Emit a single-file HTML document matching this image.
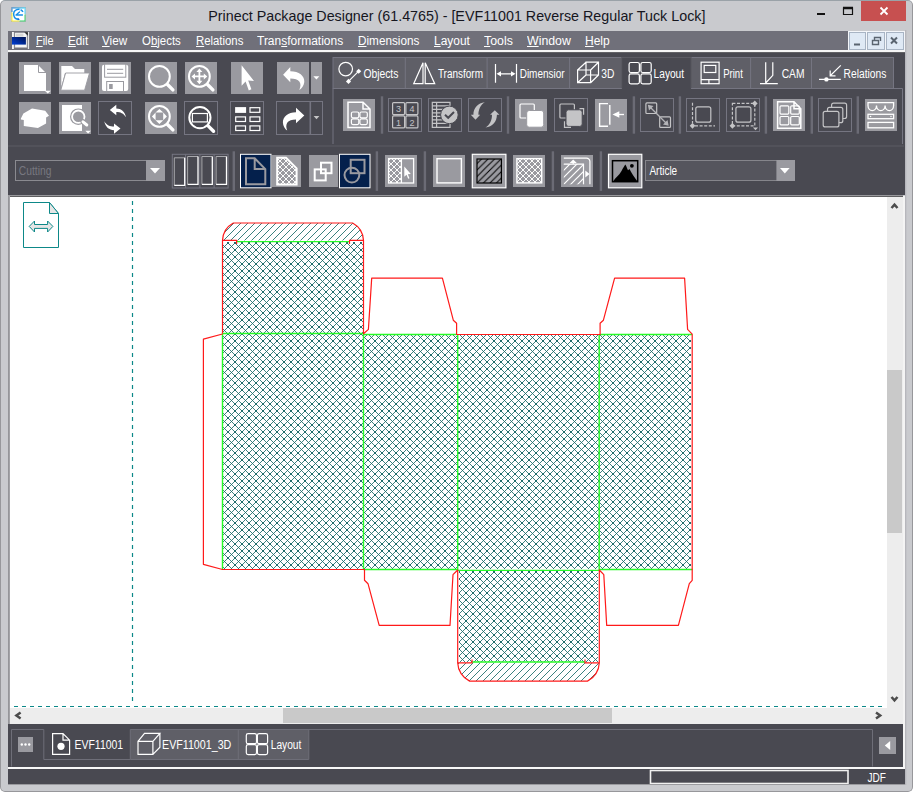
<!DOCTYPE html>
<html><head><meta charset="utf-8">
<style>
*{box-sizing:border-box;margin:0;padding:0}
html,body{width:913px;height:792px;overflow:hidden;background:#fff;font-family:"Liberation Sans",sans-serif;}
#w{position:absolute;left:0;top:0;width:913px;height:792px;background:#c9cace;overflow:hidden;border-radius:5px}#wb{position:absolute;left:0;top:0;width:913px;height:792px;border:1px solid #97979b;border-top-color:#9aa2a8;border-radius:5px;pointer-events:none}
.a{position:absolute}
#title{left:0;top:7px;width:913px;text-align:center;font-size:15px;color:#16161e;white-space:nowrap}#tt{display:inline-block;transform:scaleX(.953);transform-origin:50% 50%}
#menubar{left:8px;top:31px;width:897px;height:20px;background:#70707a}
#menubar span{position:absolute;top:2.5px;font-size:12px;color:#fff;white-space:nowrap;transform-origin:0 0}
#tb{left:8px;top:53px;width:897px;height:142px;background:#494951}
.b{position:absolute;width:32px;height:32px;background:#9a9aa0}
.bd{position:absolute;width:33px;height:33px;border:1px solid #73737b}
#canvas{left:10px;top:197px;width:877px;height:511px;background:#fff}
#bottom{left:8px;top:724px;width:895px;height:43px;background:#494951}
.tab{position:absolute;top:57px;height:32px;background:#62626a;border:1px solid #72727a;border-bottom:none;color:#fff;font-size:12px}
.tab span{position:absolute;top:9px;white-space:nowrap;transform-origin:0 0;transform:scaleX(.88)}
.sep{position:absolute;width:3px;background:#66666e}
svg{position:absolute;overflow:visible}
.mdi{top:1px;width:17px;height:17.700px;background:#dfe9f5;border:1px solid #a8b4c4}
</style></head><body>
<div id="w">
<svg style="left:11px;top:7px" width="15" height="15" viewBox="0 0 15 15"><defs><linearGradient id="ig" x1="0" y1="0" x2="1" y2="0"><stop offset="0" stop-color="#1878d0"/><stop offset="1" stop-color="#28d4ff"/></linearGradient></defs><rect x="0" y="0" width="15" height="15" rx="1" fill="#8a8a90"/><rect x="0.500" y="0.500" width="14" height="14" fill="#fff"/><path d="M0.500,0.500 H14.500 V1.500 H0.500 Z" fill="url(#ig)"/><path d="M0.500,1.500 H1.500 V5 H0.500 Z" fill="#2a80c8"/><path d="M13.500,1.500 H14.500 V7 H13.500 Z" fill="#50d8ff"/><path d="M0.500,5.500 H1.500 V13.500 H8.500 V14.500 H0.500 Z" fill="#fff030"/><path d="M13.500,7.500 H14.500 V14.500 H8.500 V13.500 H13.500 Z" fill="#38d068"/><path d="M12,4.800 A5,5 0 1 0 8,12.300" stroke="#1890e8" stroke-width="1.500" fill="none" stroke-dasharray="3.200 1 30"/><path d="M5,8 H11.500 M5,8 L8.500,5" stroke="#1890e8" stroke-width="1.300" fill="none" stroke-linecap="round"/><path d="M6.500,11 L9,12.300 L6.800,13.500 Z" fill="#1070e0"/></svg>
<div class="a" id="title"><span id="tt">Prinect Package Designer (61.4765) - [EVF11001 Reverse Regular Tuck Lock]</span></div>
<div class="a" style="left:861px;top:1px;width:45px;height:20px;background:#c75050"></div>
<svg style="left:810px;top:0" width="103" height="30"><path d="M7,14 H15" stroke="#111" stroke-width="2" fill="none"/><path d="M33.500,8 H42.500 V14.500 H33.500 Z" stroke="#111" stroke-width="1.200" fill="none"/><path d="M33,8 H43" stroke="#111" stroke-width="2.400"/><path d="M70.500,7.500 L77.500,14.500 M77.500,7.500 L70.500,14.500" stroke="#fff" stroke-width="1.800" fill="none"/></svg>

<div class="a" id="menubar">
<svg style="left:4px;top:1px" width="18" height="18" viewBox="0 0 18 18"><defs><linearGradient id="bg1" x1="0" y1="1" x2="1" y2="0"><stop offset="0" stop-color="#0040d8"/><stop offset="1" stop-color="#001250"/></linearGradient></defs><rect x="0" y="0" width="1.900" height="17" fill="#f4f4f4"/><rect x="15.800" y="0" width="1.300" height="17" fill="#e4e4e4"/><rect x="2.800" y="0.600" width="12.300" height="15.200" fill="#f6f6f6" stroke="#8a8a92" stroke-width=".6"/><rect x="4" y="1.600" width="7.400" height="3" fill="#d6d6d6"/><path d="M12.300,0.300 L15.800,0.300 L15.800,3.800 Z" fill="#2a2a2a"/><rect x="0" y="5" width="13.900" height="7.600" fill="url(#bg1)"/></svg>
<span style="left:28.3px;transform:scaleX(0.907)"><u>F</u>ile</span>
<span style="left:60.0px;transform:scaleX(0.976)"><u>E</u>dit</span>
<span style="left:93.8px;transform:scaleX(0.977)"><u>V</u>iew</span>
<span style="left:133.6px;transform:scaleX(0.953)">O<u>b</u>jects</span>
<span style="left:187.5px;transform:scaleX(0.946)"><u>R</u>elations</span>
<span style="left:249.4px;transform:scaleX(0.999)">Tran<u>s</u>formations</span>
<span style="left:350.2px;transform:scaleX(0.979)"><u>D</u>imensions</span>
<span style="left:425.8px;transform:scaleX(0.994)"><u>L</u>ayout</span>
<span style="left:476.2px;transform:scaleX(1.029)"><u>T</u>ools</span>
<span style="left:519.0px;transform:scaleX(1.028)"><u>W</u>indow</span>
<span style="left:577.0px;transform:scaleX(1.000)"><u>H</u>elp</span>
<div class="a" style="left:840px;top:0;width:57px;height:20px;background:#f4f6fa"></div>
<div class="a mdi" style="left:841px"></div><div class="a mdi" style="left:859.300px;width:17.300px"></div><div class="a mdi" style="left:878.300px;width:17.400px"></div>
<svg style="left:840px;top:0" width="57" height="20"><g stroke="#5a6470" fill="none"><path d="M6,13.500 H12" stroke-width="2"/><path d="M26.500,10 V6.500 H32.500 V10 M24.500,9.500 H30.500 V13.500 H24.500 Z" stroke-width="1.400"/><path d="M43,6.500 L49,12.500 M49,6.500 L43,12.500" stroke-width="2"/></g></svg>
</div>

<div class="a" style="left:8px;top:50px;width:897px;height:2px;background:#f6f6f6"></div><div class="a" style="left:8px;top:52px;width:897px;height:1.800px;background:#626266"></div>
<div class="a" id="tb">
<svg width="896" height="143" viewBox="8 53 896 143" style="left:0;top:0">
<rect x="19" y="62" width="32" height="32" fill="#9a9aa0"/>
<rect x="59" y="62" width="32" height="32" fill="#9a9aa0"/>
<rect x="99" y="62" width="32" height="32" fill="#9a9aa0"/>
<rect x="145" y="62" width="32" height="32" fill="#9a9aa0"/>
<rect x="185" y="62" width="32" height="32" fill="#9a9aa0"/>
<rect x="231" y="62" width="32" height="32" fill="#9a9aa0"/>
<rect x="277" y="62" width="32" height="32" fill="#9a9aa0"/>
<rect x="311" y="62" width="11" height="32" fill="#9a9aa0"/>
<rect x="19" y="102" width="32" height="32" fill="#9a9aa0"/>
<rect x="59" y="102" width="32" height="32" fill="#9a9aa0"/>
<rect x="145" y="102" width="32" height="32" fill="#9a9aa0"/>
<rect x="98.5" y="101.5" width="33" height="33" fill="none" stroke="#757581" stroke-width="1"/>
<rect x="184.5" y="101.5" width="33" height="33" fill="none" stroke="#757581" stroke-width="1"/>
<rect x="230.5" y="101.5" width="33" height="33" fill="none" stroke="#757581" stroke-width="1"/>
<rect x="276.5" y="101.5" width="46" height="33" fill="none" stroke="#757581"/><rect x="309.500" y="102" width="1.600" height="32" fill="#757581"/>
<path d="M24,65 H38 L46,73 V91 H24 Z" fill="#fff"/><path d="M38.500,65 V72.500 H46" fill="none" stroke="#9a9aa0" stroke-width="1"/><path d="M44.800,90.800 H50.800 L47.800,93.600 Z" fill="#fff"/>
<path d="M61.3,66 H72 L75,69 H84.3 V73 H65 L61.3,87 Z" fill="#fff"/><path d="M65.6,73 H89.5 L84.6,90.2 H60.8 Z" fill="#fff" stroke="#9a9aa0" stroke-width="0.9"/>
<rect x="102" y="64.7" width="26.2" height="26.3" rx="2" fill="#fff"/>
<rect x="104.6" y="64.2" width="21.2" height="13" fill="#fff" stroke="#9a9aa0" stroke-width="1"/><path d="M107,69.3 H123.2 M107,73.3 H123.2" stroke="#9a9aa0" stroke-width="1"/>
<rect x="106.7" y="81.5" width="16.8" height="10" fill="#fff" stroke="#9a9aa0" stroke-width="1"/><rect x="109.1" y="84" width="3.6" height="5" fill="#9a9aa0"/>
<path d="M20.9,118.6 L23.4,113.6 L32,108.4 L45.2,110.7 L49,115.7 L46.1,117.5 V123.6 L37.9,128 L23.8,125.9 V120 L20.9,119.5 Z" fill="#fff"/>
<rect x="62" y="105" width="20" height="26" fill="#fff"/>
<circle cx="78.300" cy="116.700" r="8.300" fill="#9a9aa0"/><circle cx="78.300" cy="116.700" r="6.200" fill="#9a9aa0" stroke="#fff" stroke-width="1.800"/>
<path d="M82.800,121.500 L87,125.200" stroke="#9a9aa0" stroke-width="5" stroke-linecap="round"/><path d="M83,121.800 L86.800,125" stroke="#fff" stroke-width="3" stroke-linecap="round"/>
<path d="M85.300,130.800 H90.900 L88.100,133.500 Z" fill="#fff"/>
<path d="M109.800,110 L116.300,104.800 V108.400 C121,108.400 125,111.500 126,117.300 C123.500,113.300 120.500,112 116.300,112 V115.200 Z" fill="#fff"/>
<path d="M120.500,128.600 L114,133.800 V130.200 C109.300,130.200 105.300,127.100 104.300,121.300 C106.800,125.300 109.800,126.600 114,126.600 V123.400 Z" fill="#fff"/>
<circle cx="159.4" cy="76.4" r="10.4" fill="none" stroke="#fff" stroke-width="2"/>
<path d="M167.488,84.488 L172.888,89.888" stroke="#fff" stroke-width="3.400" stroke-linecap="round"/>
<circle cx="199.4" cy="76.4" r="10.4" fill="none" stroke="#fff" stroke-width="2"/>
<path d="M207.488,84.488 L212.888,89.888" stroke="#fff" stroke-width="3.400" stroke-linecap="round"/>
<circle cx="159.4" cy="116.4" r="10.4" fill="none" stroke="#fff" stroke-width="2"/>
<path d="M167.488,124.488 L172.888,129.888" stroke="#fff" stroke-width="3.400" stroke-linecap="round"/>
<circle cx="199.9" cy="117.6" r="10.6" fill="none" stroke="#fff" stroke-width="2"/>
<path d="M208.132,125.832 L213.532,131.232" stroke="#fff" stroke-width="3.400" stroke-linecap="round"/>
<path d="M199.400,68.500 L202.400,72 H200.300 V75.500 H203.800 V73.400 L207.300,76.400 L203.800,79.400 V77.300 H200.300 V80.800 H202.400 L199.400,84.300 L196.400,80.800 H198.500 V77.300 H195 V79.400 L191.500,76.400 L195,73.400 V75.500 H198.500 V72 H196.400 Z" fill="#fff"/>
<path d="M159.400,108.900 L163.300,112.600 H155.500 Z M159.400,123.900 L163.300,120.200 H155.500 Z M151.900,116.400 L155.600,112.500 V120.300 Z M166.900,116.400 L163.200,112.500 V120.300 Z" fill="#fff"/>
<rect x="192.400" y="113.500" width="15" height="8.400" fill="none" stroke="#fff" stroke-width="1.200"/>
<path d="M241.600,65.300 V85.700 L245.600,81.600 L248.800,90.400 L251.400,89.300 L248.200,80.600 L254,81 Z" fill="#fff"/>
<rect x="235.100" y="107.100" width="11" height="5.800" fill="#fff"/>
<rect x="250.0" y="107.69999999999999" width="9.800" height="4.600" fill="none" stroke="#fff" stroke-width="1.200"/>
<rect x="235.7" y="116.89999999999999" width="9.800" height="4.600" fill="none" stroke="#fff" stroke-width="1.200"/>
<rect x="250.0" y="116.89999999999999" width="9.800" height="4.600" fill="none" stroke="#fff" stroke-width="1.200"/>
<rect x="235.7" y="125.89999999999999" width="9.800" height="4.600" fill="none" stroke="#fff" stroke-width="1.200"/>
<rect x="250.0" y="125.89999999999999" width="9.800" height="4.600" fill="none" stroke="#fff" stroke-width="1.200"/>
<path d="M283.100,74.700 L290.300,67 V71.300 C299,71.300 304.800,76 304.300,82 C303.800,86 301.500,88.500 299.300,90 C300.800,86.500 300.800,83.800 299.500,81.800 C297.800,79.300 294.800,78.400 290.300,78.400 V82.200 Z" fill="#fff"/>
<path d="M313.400,76.200 H319.400 L316.400,79.600 Z" fill="#fff"/>
<path d="M304.300,115.600 L296,107.800 V112.200 C288,112.200 282.800,117 282.900,122.500 C283,126 285,129 287.200,130.600 C286,127.500 286,124.800 287.200,122.800 C289,120.200 291.800,119.400 296,119.400 V123.300 Z" fill="#fff"/>
<path d="M313.600,116 H319.400 L316.500,119.300 Z" fill="#c4c4c6"/>
<rect x="333" y="57.500" width="560.500" height="31" fill="#5f5f67" stroke="#757581" stroke-width="1"/>
<rect x="404.8" y="58" width="1" height="30" fill="#757581"/>
<rect x="486.6" y="58" width="1" height="30" fill="#757581"/>
<rect x="569.1" y="58" width="1" height="30" fill="#757581"/>
<rect x="750.1" y="58" width="1" height="30" fill="#757581"/>
<rect x="811.0" y="58" width="1" height="30" fill="#757581"/>
<rect x="621.700" y="57" width="69.500" height="33" fill="#494951"/><path d="M621.700,88.500 V57.500 H691.200 V88.500" fill="none" stroke="#5a5a62" stroke-width="1"/>
<path d="M621.700,88.500 H333 V144 M691.200,88.500 H902.500 V144" fill="none" stroke="#757581" stroke-width="1"/>
<circle cx="345.700" cy="69.100" r="6.800" stroke="#fff" fill="none" stroke-width="1.200"/><path d="M358.700,71.200 L348.500,81.400" stroke="#fff" fill="none" stroke-width="1.200"/><rect x="356.900" y="69.400" width="3.600" height="3.600" fill="#fff" transform="rotate(45 358.700 71.200)"/><rect x="346.700" y="79.600" width="3.600" height="3.600" fill="#fff" transform="rotate(45 348.500 81.400)"/>
<path d="M413.700,83.700 L423,62.800 V83.700 Z M425.200,62.800 V83.700 H434.700 Z" stroke="#fff" fill="none" stroke-width="1.200"/>
<path d="M495.500,64.100 V82.700 M516.500,64.100 V82.700 M498,73.800 H514" stroke="#fff" fill="none" stroke-width="1.200"/><path d="M496.500,73.800 L501,71.200 V76.400 Z M515.500,73.800 L511,71.200 V76.400 Z" fill="#fff"/>
<path d="M577.600,70 H590.600 V82.700 H577.600 Z M586,62.200 H598.500 V75 H586 Z M577.600,70 L586,62.200 M590.600,70 L598.500,62.200 M590.600,82.700 L598.500,75 M577.600,82.700 L586,75" stroke="#fff" fill="none" stroke-width="1.200"/>
<rect x="629.0999999999999" y="62.5" width="10.300" height="10" rx="1.800" stroke="#fff" fill="none" stroke-width="1.200"/>
<rect x="640.9" y="62.5" width="10.300" height="10" rx="1.800" stroke="#fff" fill="none" stroke-width="1.200"/>
<rect x="629.0999999999999" y="73.89999999999999" width="10.300" height="10" rx="1.800" stroke="#fff" fill="none" stroke-width="1.200"/>
<rect x="640.9" y="73.89999999999999" width="10.300" height="10" rx="1.800" stroke="#fff" fill="none" stroke-width="1.200"/>
<rect x="701.100" y="62.200" width="18" height="21.500" stroke="#fff" fill="none" stroke-width="1.200"/><rect x="704.200" y="65.400" width="11.600" height="7.100" stroke="#fff" fill="none" stroke-width="1.200"/><path d="M701.100,79.600 H719.100 M708.900,79.600 V83.700" stroke="#fff" fill="none" stroke-width="1.200"/>
<path d="M765.700,62.200 V83.700 M772.800,62.200 V75.300 L765.700,83 M760,83.700 H777.800" stroke="#fff" fill="none" stroke-width="1.200"/>
<path d="M819,79.400 H840.800 M840.800,65.400 L830.200,75.800 M830.200,70.500 V75.800 H835.500" stroke="#fff" fill="none" stroke-width="1.200"/><circle cx="826.400" cy="79.400" r="2.200" fill="#fff"/>
<rect x="343" y="99" width="32" height="32" fill="#9a9aa0"/>
<rect x="515" y="99" width="32" height="32" fill="#9a9aa0"/>
<rect x="595" y="99" width="32" height="32" fill="#9a9aa0"/>
<rect x="773" y="99" width="32" height="32" fill="#9a9aa0"/>
<rect x="865" y="99" width="32" height="32" fill="#9a9aa0"/>
<rect x="388.5" y="98.5" width="33" height="33" fill="none" stroke="#757581" stroke-width="1"/>
<rect x="428.5" y="98.5" width="33" height="33" fill="none" stroke="#757581" stroke-width="1"/>
<rect x="468.5" y="98.5" width="33" height="33" fill="none" stroke="#757581" stroke-width="1"/>
<rect x="554.5" y="98.5" width="33" height="33" fill="none" stroke="#757581" stroke-width="1"/>
<rect x="640.5" y="98.5" width="33" height="33" fill="none" stroke="#757581" stroke-width="1"/>
<rect x="686.5" y="98.5" width="33" height="33" fill="none" stroke="#757581" stroke-width="1"/>
<rect x="726.5" y="98.5" width="33" height="33" fill="none" stroke="#757581" stroke-width="1"/>
<rect x="818.5" y="98.5" width="33" height="33" fill="none" stroke="#757581" stroke-width="1"/>
<rect x="380.8" y="96.3" width="2.400" height="37.39999999999999" fill="#6b6b75"/>
<rect x="506.8" y="96.3" width="2.400" height="37.39999999999999" fill="#6b6b75"/>
<rect x="632.6999999999999" y="96.3" width="2.400" height="37.39999999999999" fill="#6b6b75"/>
<rect x="678.6999999999999" y="96.3" width="2.400" height="37.39999999999999" fill="#6b6b75"/>
<rect x="764.6999999999999" y="96.3" width="2.400" height="37.39999999999999" fill="#6b6b75"/>
<rect x="810.5999999999999" y="96.3" width="2.400" height="37.39999999999999" fill="#6b6b75"/>
<rect x="856.5999999999999" y="96.3" width="2.400" height="37.39999999999999" fill="#6b6b75"/>
<path d="M348,102.300 H363 L370,109 V127.600 H348 Z M363,102.300 V109 H370" stroke="#fff" fill="none" stroke-width="1.500"/>
<rect x="351.40000000000003" y="112.0" width="7.400" height="5.800" rx="1.500" stroke="#fff" fill="none" stroke-width="1.200"/>
<rect x="359.90000000000003" y="112.0" width="7.400" height="5.800" rx="1.500" stroke="#fff" fill="none" stroke-width="1.200"/>
<rect x="351.40000000000003" y="118.8" width="7.400" height="5.800" rx="1.500" stroke="#fff" fill="none" stroke-width="1.200"/>
<rect x="359.90000000000003" y="118.8" width="7.400" height="5.800" rx="1.500" stroke="#fff" fill="none" stroke-width="1.200"/>
<rect x="392.6" y="102.6" width="12" height="12" rx="1" stroke="#c4c4c6" fill="none" stroke-width="1.200"/><text x="398.6" y="112.3" font-size="9" fill="#c4c4c6" text-anchor="middle" font-family="Liberation Sans">3</text>
<rect x="405.90000000000003" y="102.6" width="12" height="12" rx="1" stroke="#c4c4c6" fill="none" stroke-width="1.200"/><text x="411.90000000000003" y="112.3" font-size="9" fill="#c4c4c6" text-anchor="middle" font-family="Liberation Sans">4</text>
<rect x="392.6" y="115.89999999999999" width="12" height="12" rx="1" stroke="#c4c4c6" fill="none" stroke-width="1.200"/><text x="398.6" y="125.6" font-size="9" fill="#c4c4c6" text-anchor="middle" font-family="Liberation Sans">1</text>
<rect x="405.90000000000003" y="115.89999999999999" width="12" height="12" rx="1" stroke="#c4c4c6" fill="none" stroke-width="1.200"/><text x="411.90000000000003" y="125.6" font-size="9" fill="#c4c4c6" text-anchor="middle" font-family="Liberation Sans">2</text>
<path d="M432.300,102.300 H450 V127.400 H432.300 Z M436.600,102.300 V127.400 M432.300,105.800 H450 M432.300,109.300 H450 M432.300,112.800 H450 M432.300,116.300 H450 M432.300,119.800 H450 M432.300,123.300 H450" stroke="#c4c4c6" fill="none" stroke-width="1.200"/>
<circle cx="449.400" cy="114.900" r="8.800" fill="#c4c4c6" stroke="#494951" stroke-width="1"/><path d="M445,114.800 L448.200,117.800 L454,112" stroke="#494951" stroke-width="2" fill="none"/>
<path d="M484.8,102.3 C478,103 473.4,108 473.4,114.8 H470.8 L475.5,119.8 L480.2,114.8 H478.4 C478.4,109.5 480.5,105 484.8,102.3 Z" fill="#c4c4c6"/>
<path d="M485.5,127.6 C492.3,126.9 496.9,121.9 496.9,114.8 H499.4 L494.8,110.2 L490.1,114.8 H492 C492,120.4 489.8,124.9 485.5,127.6 Z" fill="#c4c4c6"/>
<rect x="520" y="104" width="14.300" height="14" rx="1" stroke="#fff" fill="none" stroke-width="1.200"/><rect x="526.700" y="110.500" width="17" height="16.700" rx="2.500" fill="#fff" stroke="#9a9aa0" stroke-width="1"/>
<rect x="559.900" y="104" width="14.500" height="14" rx="1" stroke="#c4c4c6" fill="none" stroke-width="1.200"/><rect x="566" y="109.800" width="16.200" height="16.600" rx="2.500" fill="#c4c4c6" stroke="#494951" stroke-width="1"/><path d="M579.500,108.600 H583.600 V114.800 M564.500,121.200 V127.400 H571" stroke="#c4c4c6" fill="none" stroke-width="1.200"/>
<path d="M608,103.600 H599.600 V126.300 H608 M609.800,104.900 V124.800" stroke="#fff" fill="none" stroke-width="1.400"/><path d="M612.500,114.500 L619.300,111.300 V117.700 Z" fill="#fff"/><path d="M619,114.500 H624" stroke="#fff" stroke-width="1.300"/>
<rect x="645.900" y="102.900" width="10.800" height="10.600" rx="1" stroke="#c4c4c6" fill="none" stroke-width="1.200"/><rect x="659.700" y="116.800" width="10.800" height="10.600" rx="1" stroke="#c4c4c6" fill="none" stroke-width="1.200"/><path d="M650,107 L666.500,123.500" stroke="#b4b4b8" stroke-width="1.300"/><path d="M647.800,104.800 L653.500,106 L649,110.500 Z M668.700,125.700 L663,124.500 L667.500,120 Z" fill="#b4b4b8"/>
<rect x="695.800" y="106.800" width="15" height="15.400" rx="2" stroke="#c4c4c6" fill="none" stroke-width="1.200"/><path d="M692.500,102.700 V123.600" stroke="#c4c4c6" fill="none" stroke-width="1.200" stroke-dasharray="3 1.600"/><path d="M695,125.800 H715" stroke="#c4c4c6" fill="none" stroke-width="1.200" stroke-dasharray="3 1.600"/><rect x="690.500" y="123.800" width="4" height="4" fill="#c4c4c6" transform="rotate(45 692.500 125.800)"/>
<rect x="735.900" y="106.800" width="15" height="15.400" rx="2" stroke="#c4c4c6" fill="none" stroke-width="1.200"/><rect x="732.400" y="103.400" width="22.400" height="22.400" stroke="#c4c4c6" fill="none" stroke-width="1.200" stroke-dasharray="3 1.600"/><rect x="752.800" y="101.400" width="4" height="4" fill="#c4c4c6" transform="rotate(45 754.800 103.400)"/><rect x="730.400" y="123.800" width="4" height="4" fill="#c4c4c6" transform="rotate(45 732.400 125.800)"/><path d="M752.900,127.600 H758.100 L755.500,130.300 Z" fill="#c4c4c6"/>
<path d="M777.600,101.700 H794 L800.800,108.800 V128.300 H777.600 Z M794,101.700 V108.800 H800.800" stroke="#fff" fill="none" stroke-width="1.500"/>
<rect x="780.0" y="105.8" width="8.8" height="8.300" rx="1" stroke="#fff" fill="none" stroke-width="1.200"/>
<rect x="790.6999999999999" y="105.8" width="8.6" height="8.300" rx="1" stroke="#fff" fill="none" stroke-width="1.200"/>
<rect x="780.0" y="116.5" width="8.8" height="8.300" rx="1" stroke="#fff" fill="none" stroke-width="1.200"/>
<rect x="790.6999999999999" y="116.5" width="8.6" height="8.300" rx="1" stroke="#fff" fill="none" stroke-width="1.200"/>
<rect x="831.600" y="103.200" width="15" height="15.300" rx="2" fill="#494951" stroke="#c4c4c6" stroke-width="1.200"/>
<rect x="827.500" y="107.400" width="15.300" height="15.300" rx="2" fill="#494951" stroke="#c4c4c6" stroke-width="1.200"/>
<rect x="823.200" y="111.300" width="15.700" height="15.600" rx="2" fill="#494951" stroke="#c4c4c6" stroke-width="1.200"/>
<path d="M868,102.600 H893.600 V105.500 A4.200,5 0 0 1 885.100,105.500 A4.200,5 0 0 1 876.500,105.500 A4.200,5 0 0 1 868,105.500 Z" stroke="#fff" fill="none" stroke-width="1.300"/>
<rect x="868" y="114.300" width="25.600" height="4.400" stroke="#fff" fill="none" stroke-width="1.300"/><rect x="868" y="122.400" width="25.600" height="5.400" stroke="#fff" fill="none" stroke-width="1.300"/><circle cx="870.600" cy="116.500" r=".7" fill="#fff"/><circle cx="891" cy="116.500" r=".7" fill="#fff"/>
<rect x="8" y="145.500" width="896" height="1" fill="#5c5c64"/>
<rect x="15.500" y="160.500" width="149" height="20" fill="#4a4a52" stroke="#8a8a90" stroke-width="1"/><rect x="146" y="160" width="19" height="21" fill="#9a9aa0"/><path d="M150,168 H160 L155,173.500 Z" fill="#fff"/>
<rect x="172.300" y="154.300" width="55.800" height="33.700" fill="none" stroke="#757581" stroke-width="1"/>
<rect x="185.1" y="154.300" width="1" height="33.700" fill="#757581"/>
<rect x="199.4" y="154.300" width="1" height="33.700" fill="#757581"/>
<rect x="213.6" y="154.300" width="1" height="33.700" fill="#757581"/>
<path d="M174.3,185.4 V157.8 H184.70000000000002" stroke="#a8a8ac" stroke-width="1" fill="none"/><path d="M184.70000000000002,157.8 V185.4 H174.3" stroke="#fff" stroke-width="1.300" fill="none"/>
<path d="M187.6,184.3 V156.5 H198.0" stroke="#a8a8ac" stroke-width="1" fill="none"/><path d="M198.0,156.5 V184.3 H187.6" stroke="#fff" stroke-width="1.300" fill="none"/>
<path d="M201.9,184.3 V156.5 H212.3" stroke="#a8a8ac" stroke-width="1" fill="none"/><path d="M212.3,156.5 V184.3 H201.9" stroke="#fff" stroke-width="1.300" fill="none"/>
<path d="M216.1,184.3 V156.5 H226.5" stroke="#a8a8ac" stroke-width="1" fill="none"/><path d="M226.5,156.5 V184.3 H216.1" stroke="#fff" stroke-width="1.300" fill="none"/>
<rect x="232.60000000000002" y="151.3" width="2.400" height="39.599999999999994" fill="#6b6b75"/>
<rect x="375.7" y="151.3" width="2.400" height="39.599999999999994" fill="#6b6b75"/>
<rect x="423.7" y="151.3" width="2.400" height="39.599999999999994" fill="#6b6b75"/>
<rect x="551.6999999999999" y="151.3" width="2.400" height="39.599999999999994" fill="#6b6b75"/>
<rect x="599.6999999999999" y="151.3" width="2.400" height="39.599999999999994" fill="#6b6b75"/>
<rect x="240.500" y="154.300" width="30.500" height="33.500" fill="#04204c" stroke="#fff" stroke-width="1"/>
<path d="M246,158.300 H254.700 L265.300,169.100 V184.300 H246 Z M254.700,158.300 V169.100 H265.300" stroke="#9a9aa0" stroke-width="2" fill="none"/>
<rect x="272" y="155" width="29" height="32" fill="#9a9aa0"/>
<defs><pattern id="wx" width="6" height="6" patternUnits="userSpaceOnUse" x="277" y="158"><path d="M-1,1 L1,-1 M0,6 L6,0 M5,7 L7,5 M-1,5 L1,7 M0,0 L6,6 M5,-1 L7,1" stroke="#fff" stroke-width="0.95"/></pattern><pattern id="wh" width="7" height="7" patternUnits="userSpaceOnUse" x="563" y="164"><path d="M-1,1 L1,-1 M0,7 L7,0 M6,8 L8,6" stroke="#fff" stroke-width="1.200"/></pattern><pattern id="bh" width="6.5" height="6.5" patternUnits="userSpaceOnUse" x="476" y="158"><path d="M-1,1 L1,-1 M0,6.5 L6.5,0 M5.5,7.5 L7.5,5.5" stroke="#000" stroke-width="1"/></pattern></defs>
<path d="M277.200,157.800 H286 L296.600,168.400 V184.400 H277.200 Z" fill="url(#wx)" stroke="#fff" stroke-width="2"/>
<rect x="309" y="155" width="29" height="32" fill="#9a9aa0"/>
<rect x="321" y="162.700" width="10.500" height="10.500" stroke="#fff" stroke-width="2" fill="none"/><rect x="314.700" y="169.400" width="11" height="11" stroke="#fff" stroke-width="2" fill="none"/>
<rect x="339.500" y="154.300" width="30.500" height="33.500" fill="#04204c" stroke="#fff" stroke-width="1"/>
<rect x="350.700" y="159.800" width="13.800" height="13.400" stroke="#9a9aa0" stroke-width="2" fill="none"/><circle cx="351.900" cy="175.100" r="7.400" stroke="#9a9aa0" stroke-width="2" fill="none"/>
<rect x="385" y="155" width="32" height="32" fill="#9a9aa0"/>
<rect x="388.600" y="158.600" width="12.800" height="24.400" fill="url(#wx)"/><rect x="388.600" y="158.600" width="25" height="24.400" fill="none" stroke="#fff" stroke-width="1.300"/><path d="M401.400,158.600 V183" stroke="#fff" stroke-width="1.300"/><path d="M404.300,166.500 V176.800 L406.500,174.800 L408.200,178.800 L409.500,178.200 L407.800,174.300 L410.800,174.100 Z" fill="#fff"/>
<rect x="433" y="155" width="32" height="32" fill="#9a9aa0"/>
<rect x="437" y="158.700" width="24.400" height="24.200" fill="none" stroke="#fff" stroke-width="1.400"/>
<rect x="472.300" y="154.300" width="33.600" height="33.500" fill="#9a9aa0" stroke="#fff" stroke-width="1.200"/>
<rect x="477" y="159" width="24.400" height="24" fill="url(#bh)" stroke="#000" stroke-width="1.2"/>
<rect x="513" y="155" width="32" height="32" fill="#9a9aa0"/>
<rect x="516.900" y="158.700" width="24.800" height="24.200" fill="url(#wx)" stroke="#fff" stroke-width="1.400"/>
<rect x="561" y="155" width="32" height="32" fill="#9a9aa0"/>
<path d="M563.800,164.100 H583.500 V184.300 H563.800 Z" fill="url(#wh)"/><path d="M563.800,158.100 H586.500 A3.400,3.400 0 0 1 589.900,161.500 V184.300 M563.800,164.100 H583.500 V184.300" stroke="#fff" stroke-width="1.200" fill="none"/><path d="M573.2,159.4 L576.8,163 H569.6 Z M589.5,174 L585.3,170.4 V177.6 Z" fill="#fff"/><path d="M573.200,162 V164" stroke="#fff" stroke-width="1.200"/>
<rect x="608.500" y="154.300" width="33.300" height="33.500" fill="#9a9aa0" stroke="#fff" stroke-width="1.200"/>
<rect x="612.500" y="160.700" width="25.200" height="21" fill="none" stroke="#000" stroke-width="1.500"/><path d="M613,181.5 C616,177 619,175.5 621.5,171 C623,168 624,166.5 625.3,164.4 C626.5,166 627,168 628,170.2 L629.5,169 C631,172.5 634.5,177 637.5,181.5 Z" fill="#000"/><circle cx="631.900" cy="165.800" r="1.900" fill="#000"/>
<rect x="645.500" y="160.500" width="149" height="20" fill="#55555d" stroke="#85858b" stroke-width="1"/><rect x="776.400" y="160" width="18.600" height="21" fill="#9a9aa0"/><path d="M780,168.100 H789.600 L784.800,173.500 Z" fill="#fff"/>
<text x="363.4" y="78" font-size="12" fill="#fff" font-family="Liberation Sans" textLength="35" lengthAdjust="spacingAndGlyphs">Objects</text>
<text x="437.9" y="78" font-size="12" fill="#fff" font-family="Liberation Sans" textLength="45.1" lengthAdjust="spacingAndGlyphs">Transform</text>
<text x="519.7" y="78" font-size="12" fill="#fff" font-family="Liberation Sans" textLength="44.9" lengthAdjust="spacingAndGlyphs">Dimensior</text>
<text x="601.2" y="78" font-size="12" fill="#fff" font-family="Liberation Sans" textLength="13.1" lengthAdjust="spacingAndGlyphs">3D</text>
<text x="653.6" y="78" font-size="12" fill="#fff" font-family="Liberation Sans" textLength="30.5" lengthAdjust="spacingAndGlyphs">Layout</text>
<text x="723.2" y="78" font-size="12" fill="#fff" font-family="Liberation Sans" textLength="19.6" lengthAdjust="spacingAndGlyphs">Print</text>
<text x="781.7" y="78" font-size="12" fill="#fff" font-family="Liberation Sans" textLength="22.8" lengthAdjust="spacingAndGlyphs">CAM</text>
<text x="843.6" y="78" font-size="12" fill="#fff" font-family="Liberation Sans" textLength="42.8" lengthAdjust="spacingAndGlyphs">Relations</text>
<text x="18.8" y="175" font-size="12" fill="#787880" font-family="Liberation Sans" textLength="32.6" lengthAdjust="spacingAndGlyphs">Cutting</text>
<text x="649.400" y="175" font-size="12" fill="#fff" font-family="Liberation Sans" textLength="27.800" lengthAdjust="spacingAndGlyphs">Article</text>
</svg>

</div>
<div class="a" style="left:8px;top:194.600px;width:895px;height:1.200px;background:#98989c"></div><div class="a" style="left:8px;top:195.600px;width:895px;height:1.600px;background:#5e5e60"></div>
<div class="a" style="left:8px;top:196px;width:2.300px;height:571px;background:linear-gradient(90deg,#8e8e92,#aaaaae)"></div>
<div class="a" style="left:903px;top:196px;width:2px;height:573px;background:#f4f4f4"></div>
<div class="a" id="canvas">
<svg width="877" height="511" viewBox="10 197 877 511" style="left:0;top:0">
<defs>
<pattern id="xh" width="7" height="7" patternUnits="userSpaceOnUse" x="0" y="0"><g shape-rendering="crispEdges"><g fill="#3b817f"><rect x="1" y="0" width="1" height="1"/><rect x="6" y="0" width="1" height="1"/><rect x="1" y="2" width="1" height="1"/><rect x="6" y="2" width="1" height="1"/><rect x="2" y="3" width="1" height="1"/><rect x="5" y="3" width="1" height="1"/><rect x="2" y="6" width="1" height="1"/><rect x="5" y="6" width="1" height="1"/></g><g fill="#206c6b"><rect x="0" y="1" width="1" height="1"/><rect x="3" y="4" width="1" height="1"/><rect x="4" y="4" width="1" height="1"/><rect x="3" y="5" width="1" height="1"/><rect x="4" y="5" width="1" height="1"/></g></g></pattern>
<pattern id="sh" width="7" height="7" patternUnits="userSpaceOnUse" x="0" y="0"><g fill="#3b817f" shape-rendering="crispEdges"><rect x="1" y="0" width="1" height="1"/><rect x="0" y="1" width="1" height="1"/><rect x="6" y="2" width="1" height="1"/><rect x="5" y="3" width="1" height="1"/><rect x="4" y="4" width="1" height="1"/><rect x="3" y="5" width="1" height="1"/><rect x="2" y="6" width="1" height="1"/></g></pattern>
</defs>
<!-- guides -->
<path d="M132.5,201 V705" stroke="#0b8888" stroke-width="1.2" stroke-dasharray="4 4" fill="none"/>
<path d="M14,706.5 H884" stroke="#0b8888" stroke-width="1.2" stroke-dasharray="4 4" fill="none"/>
<!-- page icon -->
<path d="M23.5,202.5 H49.5 L58.5,213.5 V247.5 H23.5 Z" stroke="#0d8888" stroke-width="1" fill="#fff"/>
<path d="M49.5,202.5 V213.5 H58.5 Z" stroke="#0d8888" stroke-width="1" fill="#e6e6e6"/>
<path d="M29.2,226.4 L34.5,221 V224.5 H47.6 V221 L52.9,226.4 L47.6,232 V228.4 H34.5 V232 Z" stroke="#0d8888" stroke-width="1" fill="#e6e6e6"/>
<!-- fills -->
<rect x="223" y="334" width="468" height="235" fill="url(#xh)"/>
<rect x="223" y="242" width="140" height="91" fill="url(#xh)"/>
<rect x="459" y="571" width="139" height="91" fill="url(#xh)"/>
<path d="M222.500,240.400 A21,21 0 0 1 233.300,223 H352.600 A21,21 0 0 1 363.5,240.400 Z" fill="url(#sh)"/>
<path d="M457.700,662.800 A21,21 0 0 0 469.600,681.100 H587.500 A21,21 0 0 0 599.200,662.800 Z" fill="url(#sh)"/>
<!-- green creases -->
<g stroke="#26fb26" stroke-width="1.4" fill="none">
<path d="M236.600,241.600 H349.500"/>
<path d="M222.500,333.500 H363.500"/>
<path d="M363.500,334.5 H456.600 M600,334.5 H692"/>
<path d="M222.500,333.500 V569.500 M363.5,334 V569.500 M457.700,334.5 V570 M599.200,334.5 V570"/>
<path d="M363.5,569.500 H457.800 M457.800,570.400 H599 M599,569.500 H692.600"/>
<path d="M472,662 H585"/>
</g>
<!-- red cuts -->
<g stroke="#ff1a1a" stroke-width="1.2" fill="none" stroke-linejoin="round">
<path d="M222.500,333.500 V240.400 A21,21 0 0 1 233.300,223 H352.600 A21,21 0 0 1 363.5,240.400 V333.8 L368.400,329.400 L371.700,278.100 H442.400 L453.300,320.200 L456.600,323.200 V334.5 H600.100 V323.200 L603.400,320.200 L614.600,278.100 H684.600 L687.600,329.400 L692.200,334.100 V580.300 L689.300,583.700 L678.400,625.400 H606.700 L603.800,574.700 L599.300,570 V662.800 A21,21 0 0 1 587.500,681.100 H469.600 A21,21 0 0 1 457.700,662.800 V570 L453,574.700 L450,625.400 H379.200 L368,583.700 L364.500,580.300 V569.500 H222.500 L203.400,564.300 V339.200 L222.500,334"/>
<path d="M222.500,240.400 H236.600 V244 M363.5,240.400 H349.500 V244 M457.700,662.800 H472 V659.400 M599.200,662.800 H585 V659.400"/>
</g>
</svg>

</div>
<div class="a" style="left:887px;top:197px;width:16px;height:511px;background:#ededed"></div>
<div class="a" style="left:10px;top:708px;width:893px;height:16px;background:#ededed"></div>
<div class="a" style="left:887px;top:370px;width:15px;height:163px;background:#c9c9c9"></div>
<div class="a" style="left:283px;top:708px;width:329px;height:15px;background:#c9c9c9"></div>
<svg class="a" style="left:0;top:0" width="913" height="792">
<g stroke="#4c4c4c" stroke-width="2.5" fill="none" stroke-linejoin="miter">
<path d="M891.5,208 L894.5,204.6 L897.5,208"/>
<path d="M891.5,697 L894.5,700.4 L897.5,697"/>
<path d="M20.6,712.5 L16.4,715.5 L20.6,718.5"/>
<path d="M876,712.5 L880.2,715.5 L876,718.5"/>
</g></svg>

<div class="a" id="bottom">
<svg width="895" height="43" viewBox="8 724 895 43" style="left:0;top:0">
<rect x="130.300" y="729" width="178.500" height="30.500" fill="#5f5f67"/>
<g fill="none" stroke="#6e6e78" stroke-width="1">
<path d="M11.500,766.500 V729.500 H43.800 V759.500 H130.300"/>
<path d="M130.300,759.500 V729.500 H872.500 V766.500"/>
<path d="M130.300,759.500 H308.800 V729.500 M238.300,729.500 V759.500"/>
</g>
<rect x="18" y="737" width="15" height="15" fill="#9a9aa0"/>
<circle cx="21.800" cy="744.500" r="1.200" fill="#fff"/><circle cx="25.500" cy="744.500" r="1.200" fill="#fff"/><circle cx="29.200" cy="744.500" r="1.200" fill="#fff"/>
<g stroke="#fff" stroke-width="1.200" fill="none">
<path d="M52.600,733.600 H63 L69.600,740.200 V754.400 H52.600 Z M63,733.600 V740.200 H69.600"/>
<path d="M138,741.300 H152.900 V754.400 H138 Z M138,741.300 L144.500,733.400 H159.900 L152.900,741.300 M159.900,733.400 V747.200 L152.900,754.400"/>
<rect x="246.300" y="733.700" width="10.200" height="10" rx="1.800"/><rect x="257.400" y="733.700" width="10.200" height="10" rx="1.800"/><rect x="246.300" y="744.600" width="10.200" height="10" rx="1.800"/><rect x="257.400" y="744.600" width="10.200" height="10" rx="1.800"/>
</g>
<circle cx="61" cy="746.300" r="3.600" fill="#fff"/>
<g font-family="Liberation Sans" font-size="12" fill="#fff">
<text x="74.500" y="748.700" textLength="48.700" lengthAdjust="spacingAndGlyphs">EVF11001</text>
<text x="162" y="748.700" textLength="69.300" lengthAdjust="spacingAndGlyphs">EVF11001_3D</text>
<text x="270.700" y="748.700" textLength="30.700" lengthAdjust="spacingAndGlyphs">Layout</text>
</g>
<rect x="879" y="737" width="17" height="17" fill="#9a9aa0"/>
<path d="M884.8,745.5 L890.2,741 V750 Z" fill="#fff"/>
</svg>

</div>
<div class="a" style="left:8px;top:766.500px;width:897px;height:2.500px;background:#f8f8f8"></div>
<div class="a" id="status" style="left:8px;top:769px;width:897px;height:15px;background:#494951">
<svg width="897" height="16" viewBox="8 768.500 897 16" style="left:0;top:0">
<rect x="650.500" y="770" width="197.500" height="13" fill="none" stroke="#f0f0f0" stroke-width="1.600"/>
<text x="867.500" y="781.300" font-family="Liberation Sans" font-size="12" fill="#fff" textLength="18.500" lengthAdjust="spacingAndGlyphs">JDF</text>
</svg>

</div>
<div class="a" style="left:8px;top:784px;width:897px;height:1px;background:#9a9a9e"></div>
<div class="a" style="left:905px;top:30px;width:2px;height:755px;background:linear-gradient(90deg,#b0b0b6,#c9cace)"></div><div id="wb"></div>
</div>
</body></html>
